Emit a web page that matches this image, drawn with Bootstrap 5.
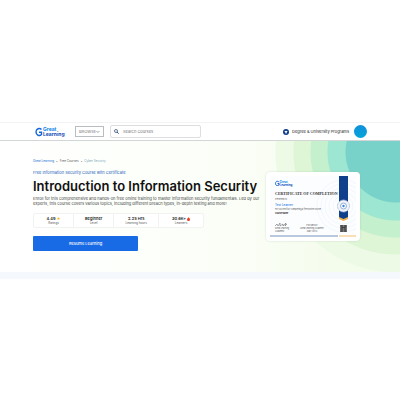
<!DOCTYPE html>
<html lang="en">
<head>
<meta charset="utf-8">
<meta name="viewport" content="width=device-width, initial-scale=1">
<title>Introduction to Information Security</title>
<link href="https://cdn.jsdelivr.net/npm/bootstrap@5.3.0/dist/css/bootstrap.min.css" rel="stylesheet">
<style>
body{font-family:Inter,"Liberation Sans",sans-serif;font-size:4px;line-height:5px;color:#222;background:#fff}
a{text-decoration:none}
.page-wrap{padding-top:122px}
.top-bar{padding:0 33px;min-height:19px;border-top:1px solid #f2f3f4;border-bottom:1px solid #d3d6d6;background:#fff}
.brand-mark{width:32px;height:12px}
.browse-btn{margin-left:10px;width:29px;height:11px;border:1px solid #b9bcc0;background:#fff;color:#777;font-size:4px;line-height:5px;padding:0 3px}
.search-box{margin-left:6px;width:91px;height:13px;border:1px solid #dcdee0;border-radius:2px;padding:0 3px}
.search-box input{border:0;outline:0;background:transparent;font-size:4px;line-height:5px;padding:0;min-width:0;color:#666}
.search-box input::placeholder{color:#777;opacity:1}
.degree-link{color:#222;gap:3px;font-size:4px}
.avatar-dot{width:13px;height:13px;margin-left:5px;border:0;padding:0;border-radius:50%;background:linear-gradient(#1190da,#04a5da)}
.hero-area{padding:18px 40px 21px 33px;background:
radial-gradient(circle at calc(100% - 4px) 11px,#79d2ca 0 50px,#9de6d1 51px 68px,#c4f0cd 69px 85px,#dff6d6 86px 102px,#edfae6 103px 120px,transparent 121px),
linear-gradient(90deg,#fff 0,#fcfffa 35%,#fbfef7 60%,#f4fceb 85%)}
.crumbs{font-size:3px;line-height:4px;gap:2px;color:#777;margin-bottom:7px}
.crumbs a{color:#1769d2}.crumbs a+span+a{color:#555}.crumbs .here{color:#7ba4b5}
.course-kind{font-size:4px;line-height:6px;color:#1c5bb8}
.course-title{font-size:13px;line-height:16px;font-weight:600;color:#111;margin:2px 0;white-space:nowrap}
.course-text{font-size:4px;line-height:5px;color:#444;white-space:nowrap}
.text-col{flex:0 0 227px;min-width:0}
.stat-row{width:171px;margin-top:7px;border:1px solid #f1f3f1;border-radius:2px;background:#fff}
.stat-cell{padding:2px 0;font-size:3px;line-height:4px;color:#555;text-align:center;flex:41 1 0}
.stat-cell+.stat-cell{border-left:1px solid #f1f2f2}
.stat-cell strong{display:block;font-size:4px;line-height:5px;font-weight:600;color:#222}
.stat-cell.wide{flex-grow:46}
.star{color:#ffbd08}.hot{width:3px;height:4px}
.resume-btn{display:block;width:105px;height:15px;margin-top:8px;padding:0;border:0;border-radius:1px;background:#196ae5;color:#fff;font-size:4px;line-height:5px;font-weight:500}
.cert-card{width:94px;margin-top:13px;padding:4px;border-radius:4px;background:#fff;box-shadow:0 0 2px #8baf9666}
.next-strip{height:7px;background:#f5f9fe}
</style>
<script src="https://cdn.jsdelivr.net/npm/bootstrap@5.3.0/dist/js/bootstrap.bundle.min.js"></script>
</head>
<body>
<div class="page-wrap">
<header class="top-bar d-flex align-items-center">
<a href="#" class="d-flex" aria-label="Great Learning">
<svg class="brand-mark" viewBox="0 0 32 12"><path d="M8.500 3.500C6.500 1.500 3 2.700 3 6s3.500 4.500 5.500 2.500V6.200H6" fill="none" stroke="#1467d8" stroke-width="1.400"/><text x="10" y="5" font-family="Inter" font-size="5" font-weight="700" fill="#1385e5">Great</text><text x="10" y="10" font-family="Inter" font-size="5" font-weight="700" fill="#124cb7">Learning</text></svg></a>
<button class="browse-btn d-flex align-items-center justify-content-between" type="button">BROWSE <svg width="4" height="4" viewBox="0 0 4 4"><path d="m.5 1 1.500 1.500L3.500 1" fill="none" stroke="#777" stroke-width=".7"/></svg></button>
<label class="search-box d-flex align-items-center gap-1"><svg width="5" height="5" viewBox="0 0 5 5"><circle cx="2" cy="2" r="1.500" fill="none" stroke="#3c5784" stroke-width=".8"/><path d="m3 3 1.700 1.700" stroke="#3c5784"/></svg><input type="text" placeholder="Search Courses" aria-label="Search Courses"></label>
<a href="#" class="degree-link ms-auto d-flex align-items-center"><svg width="6" height="6" viewBox="0 0 6 6"><circle cx="3" cy="3" r="3" fill="#103c89"/><path d="m1.200 2.600 1.800-.8 1.800.8-1.800.8zM2 3.400v.8h2v-.8" fill="#fff"/></svg><span>Degree &amp; University Programs</span></a>
<button class="avatar-dot" type="button" aria-label="Profile"></button>
</header>
<main class="hero-area d-flex justify-content-between align-items-start">
<div class="text-col">
<nav class="crumbs d-flex" aria-label="Breadcrumb"><a href="#">Great Learning</a><span>•</span><a href="#">Free Courses</a><span>•</span><span class="here">Cyber Security</span></nav>
<div class="course-kind">Free Information Security Course with Certificate</div>
<h1 class="course-title">Introduction to Information Security</h1>
<div class="course-text">Enroll for this comprehensive and hands-on free online training to master information security fundamentals. Led by our<br>experts, this course covers various topics, including different breach types, in-depth testing and more!</div>
<div class="stat-row d-flex">
<div class="stat-cell"><strong>4.49 <span class="star">★</span></strong>Ratings</div>
<div class="stat-cell"><strong>Beginner</strong>Level</div>
<div class="stat-cell wide"><strong>2.25 Hrs</strong>Learning hours</div>
<div class="stat-cell wide"><strong>30.6K+ <svg class="hot" viewBox="0 0 3 4"><path d="M1.500 0C1.300 1 0 1.300 0 2.500S.8 4 1.500 4 3 3.600 3 2.500 2.200 1 1.500 0" fill="#f0402b"/></svg></strong>Learners</div>
</div>
<button class="resume-btn" type="button">Resume Learning</button>
</div>
<div class="cert-card">
<svg class="d-block w-100" viewBox="0 0 86 61" role="img" aria-label="Certificate of completion">
<rect width="86" height="61" fill="#fcfdff"/>
<g fill="none" stroke="#e9eef6" stroke-width=".5"><circle cx="73" cy="30" r="10"/><circle cx="73" cy="30" r="14"/><circle cx="73" cy="30" r="18"/><circle cx="73" cy="30" r="22"/><circle cx="73" cy="30" r="26"/></g>
<path d="M9 6C7 4.500 5.500 5.500 5.500 7.500S7 10 9 9V7.500H7.500" fill="none" stroke="#1467d8"/>
<g font-family="Inter" font-weight="700" font-size="3"><text x="9.500" y="7" fill="#1385e5">Great</text><text x="9.500" y="10" fill="#124cb7">Learning</text></g>
<text x="5" y="19" font-family="Liberation Serif" font-size="4" font-weight="700" fill="#333">CERTIFICATE OF COMPLETION</text>
<g font-family="Inter" font-size="2" fill="#555"><text x="5" y="24">Presented to</text><text x="5" y="29.500" font-size="3" font-weight="500" fill="#287be0">Test Learner</text><text x="5" y="34">For successfully completing a free online course</text><text x="5" y="38" font-weight="700" fill="#222">Course Name</text><text x="5" y="53">Great Learning</text><text x="5" y="56">Academic</text><text x="42" y="50" text-anchor="middle">Provided by</text><text x="42" y="53" text-anchor="middle">Great Learning Academy</text><text x="42" y="56" text-anchor="middle">(May 2023)</text></g>
<path d="m5 50 2-2 1 2 2-3 0 3 3-2 0 2 3-3-1 3 2-2" fill="none" stroke="#555" stroke-width=".5"/>
<path d="M69 0h9v43l-4.500 2-4.500-2z" fill="#f4b44d"/><path d="M69 0h9v41l-4.500 2-4.500-2z" fill="#103f8b"/>
<circle cx="73.500" cy="30" r="6" fill="#f0f4fb" stroke="#a9bad7" stroke-dasharray="1 .5"/><circle cx="73.500" cy="30" r="3" fill="#fff" stroke="#6990c7" stroke-width=".7"/><circle cx="73.500" cy="30" r="1.200" fill="#3a85db"/>
<g><rect x="70" y="49" width="7" height="7" fill="#777"/><path d="M70.500 50h2m2 0h2m-5 1.500h4m-5 1.500h2m2 0h1m-5 2h2m2 0h2M72 49v7m3-7v7" stroke="#333" stroke-width=".7"/></g>
<path d="M0 60h68" stroke="#b9c8de" stroke-width="2"/><path d="M69 60h17" stroke="#f8dfb7" stroke-width="2"/>
</svg>
</div>
</main>
<div class="next-strip"></div>
</div>
</body>
</html>
